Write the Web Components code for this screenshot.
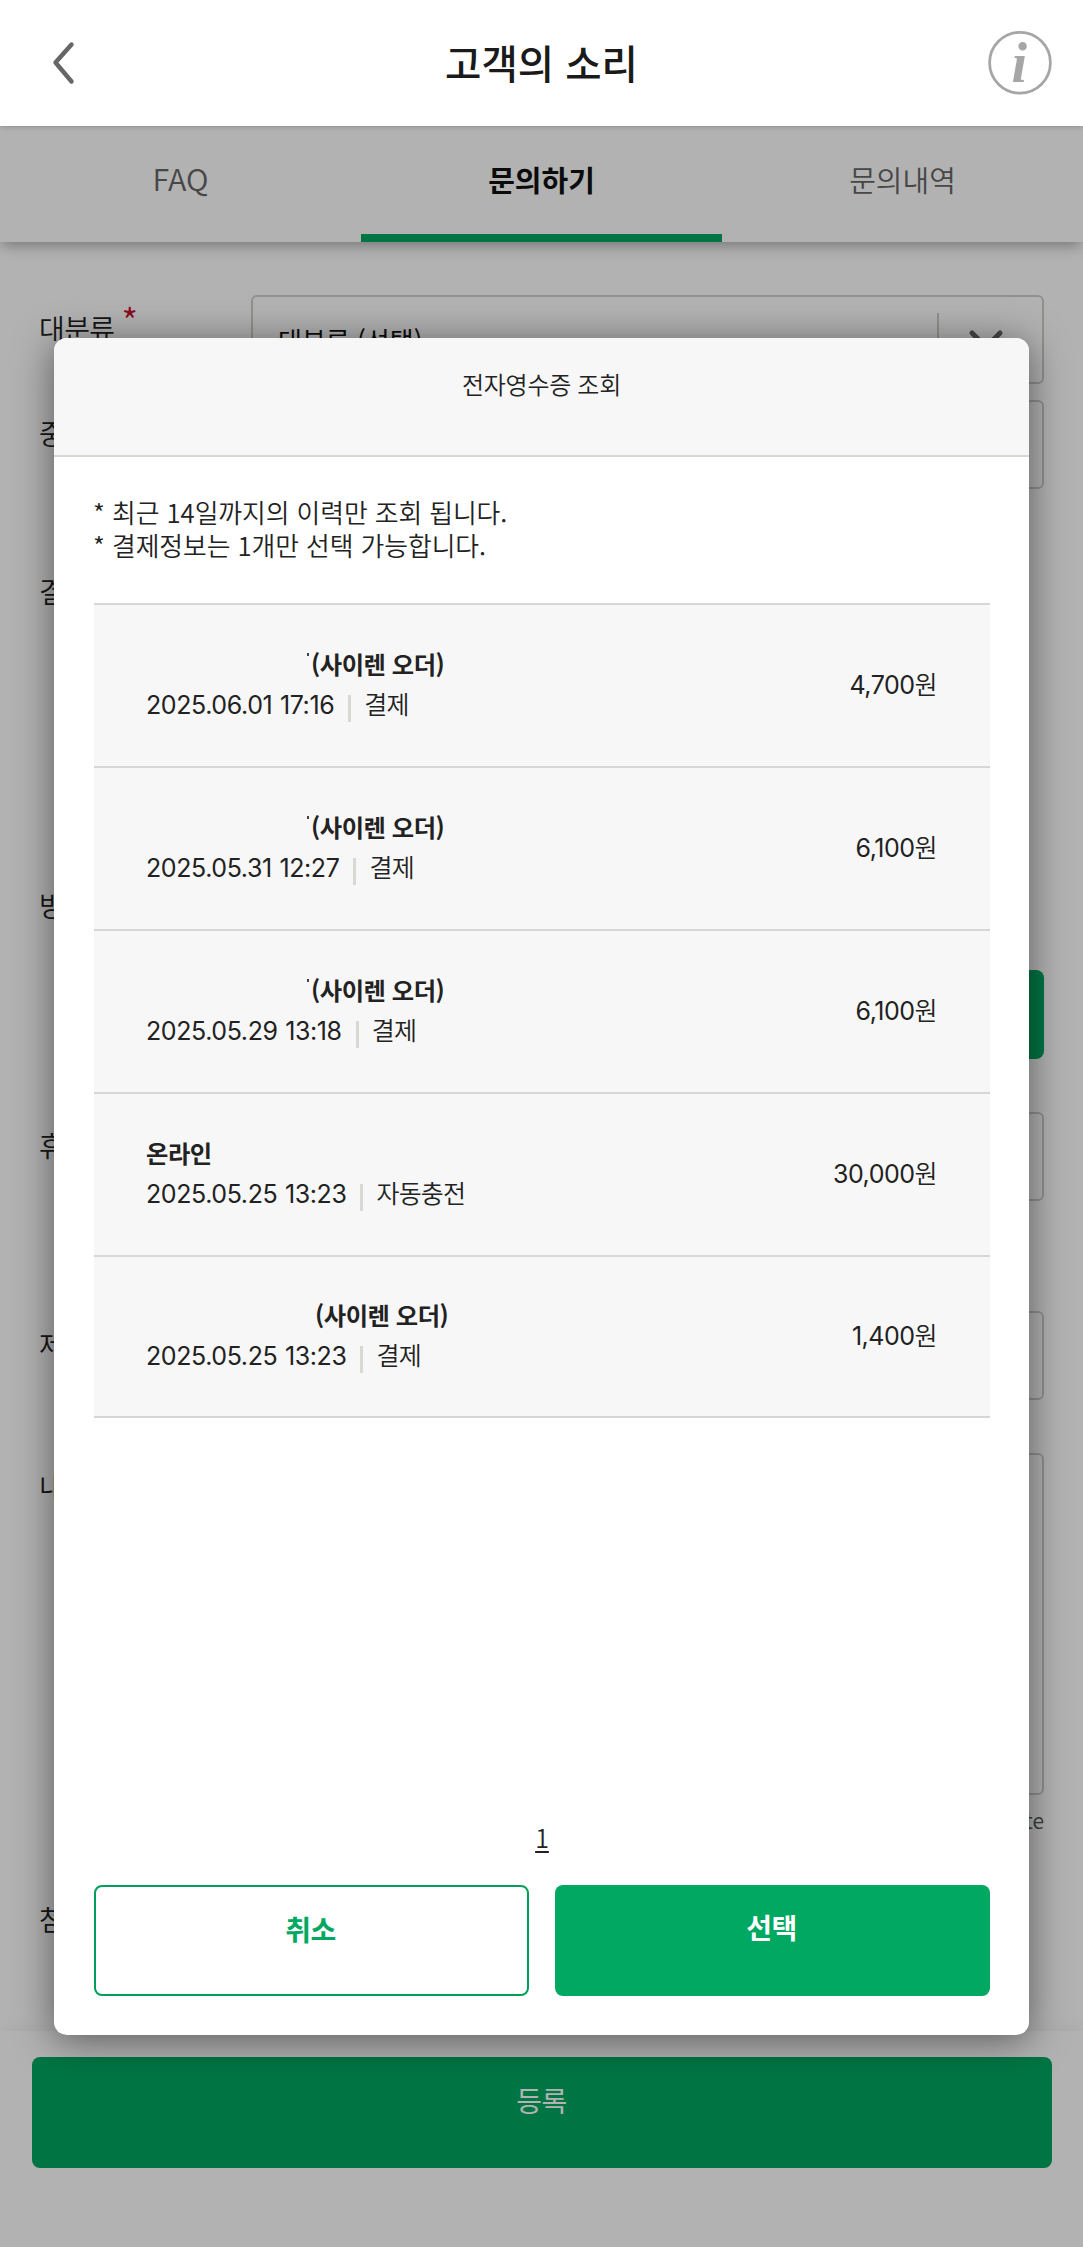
<!DOCTYPE html>
<html lang="ko">
<head>
<meta charset="utf-8">
<title>고객의 소리</title>
<style>
  body {
    margin: 0;
    height: 2247px;
    overflow: hidden;
    font-family: "Noto Sans CJK KR", sans-serif;
    font-weight: 350;
    color: #222;
    background: #fff;
  }
</style>
</head>
<body>
<voc-page>
  <voc-header slot="header">고객의 소리</voc-header>
  <voc-tabs slot="tabs">
    <voc-tab latin>FAQ</voc-tab>
    <voc-tab active>문의하기</voc-tab>
    <voc-tab>문의내역</voc-tab>
  </voc-tabs>

  <form-row label="대분류" required style="height:105px"><select-box open-label="대분류 (선택)"></select-box></form-row>
  <form-row label="중분류" style="height:158px"><input-box></input-box></form-row>
  <form-row label="결제정보" style="height:314px"></form-row>
  <form-row label="방문매장" style="height:240px"><input-box filled style="margin-top:98px"></input-box></form-row>
  <form-row label="휴대폰" style="height:199px"><input-box></input-box></form-row>
  <form-row label="제목" style="height:142px"><input-box></input-box></form-row>
  <form-row label="내용" style="height:433px"><input-box style="height:342px"></input-box><span style="display:block;margin-top:9px;text-align:right;font-size:21px;line-height:32px;color:#555">byte</span></form-row>
  <form-row label="첨부파일" style="height:100px"></form-row>

  <voc-footer slot="footer">등록</voc-footer>

  <receipt-modal slot="modal" heading="전자영수증 조회">
    <span slot="notice">* 최근 14일까지의 이력만 조회 됩니다.</span>
    <span slot="notice2">* 결제정보는 1개만 선택 가능합니다.</span>
    <receipt-item date="2025.06.01 17:16" kind="결제" price="4,700" indent="160" tick>(사이렌 오더)</receipt-item>
    <receipt-item date="2025.05.31 12:27" kind="결제" price="6,100" indent="160" tick>(사이렌 오더)</receipt-item>
    <receipt-item date="2025.05.29 13:18" kind="결제" price="6,100" indent="160" tick>(사이렌 오더)</receipt-item>
    <receipt-item date="2025.05.25 13:23" kind="자동충전" price="30,000">온라인</receipt-item>
    <receipt-item date="2025.05.25 13:23" kind="결제" price="1,400" indent="169" style="height:161px;padding-top:38px">(사이렌 오더)</receipt-item>
    <voc-button slot="actions" outline>취소</voc-button>
    <voc-button slot="actions">선택</voc-button>
  </receipt-modal>
</voc-page>

<script>
// small helper: put the markup in an open shadow root
function shadow(el, html) {
  const template = document.createElement("template");
  template.innerHTML = html;
  el.attachShadow({ mode: "open" }).append(template.content.cloneNode(true));
}

class VocPage extends HTMLElement {
  constructor() {
    super();
    shadow(this, `
      <style>
        :host { display: flex; flex-direction: column; position: relative; height: 2247px; overflow: hidden; }
        main { flex: 1; padding: 53px 39px 0 40px; min-height: 0; overflow: hidden; }
        .dim { position: absolute; inset: 126px 0 0; z-index: 3; background: rgba(0,0,0,.3); }
        slot[name=modal]::slotted(*) { position: absolute; left: 54px; top: 338px; z-index: 5; }
      </style>
      <slot name="header"></slot>
      <slot name="tabs"></slot>
      <main><slot></slot></main>
      <slot name="footer"></slot>
      <div class="dim"></div>
      <slot name="modal"></slot>
    `);
  }
}

class VocHeader extends HTMLElement {
  constructor() {
    super();
    shadow(this, `
      <style>
        :host { display: flex; justify-content: space-between; align-items: center; flex: none;
          height: 126px; box-sizing: border-box; padding: 0 30px 0 46px; position: relative; z-index: 4;
          background: #fff; box-shadow: 0 1px 5px rgba(0,0,0,.2); }
        h1 { margin: 0 0 2px; font-size: 39.5px; font-weight: 500; line-height: 60px; color: #1a1a1a; }
        svg { display: block; }
      </style>
      <svg width="50" height="66" viewBox="0 0 50 66"><path d="M25.5 14.5 9.5 32.5 25.5 51.5" fill="none" stroke="#666" stroke-width="4.4" stroke-linecap="round" stroke-linejoin="round"/></svg>
      <h1><slot></slot></h1>
      <svg width="66" height="66" viewBox="0 0 66 66">
        <circle cx="33" cy="32.7" r="30.4" fill="none" stroke="#a6a6a6" stroke-width="2.8"/>
        <text x="24.5" y="51.5" font-family="Liberation Serif" font-size="56" font-weight="bold" font-style="italic" fill="#a6a6a6">i</text>
      </svg>
    `);
  }
}

class VocTabs extends HTMLElement {
  constructor() {
    super();
    shadow(this, `
      <style>
        :host { display: grid; grid-template-columns: repeat(3, 1fr); flex: none; height: 116px;
          position: relative; z-index: 1; background: #fff; box-shadow: 0 5px 14px -2px rgba(0,0,0,.36); }
      </style>
      <slot></slot>
    `);
  }
}

class VocTab extends HTMLElement {
  constructor() {
    super();
    shadow(this, `
      <style>
        :host { display: block; box-sizing: border-box; padding-top: 32px; text-align: center;
          font-size: 29px; line-height: 42px; font-weight: 350; color: #666; }
        :host([latin]) { padding-top: 31px; font-size: 30.5px; }
        :host([active]) { font-weight: 700; color: #111; border-bottom: 8px solid #00a862; }
      </style>
      <slot></slot>
    `);
  }
}

class FormRow extends HTMLElement {
  constructor() {
    super();
    const star = this.hasAttribute("required") ? "<sup>*</sup>" : "";
    shadow(this, `
      <style>
        :host { display: grid; grid-template-columns: 211px minmax(0, 1fr); }
        label { margin-left: -1px; padding-top: 13px; font-size: 28px; line-height: 40px; letter-spacing: -.6px; white-space: nowrap; }
        sup { margin-left: 7px; font-size: 36px; line-height: 0; vertical-align: 5px; color: #c8102e; }
      </style>
      <label>${this.getAttribute("label")}${star}</label>
      <div><slot></slot></div>
    `);
  }
}

class InputBox extends HTMLElement {
  constructor() {
    super();
    shadow(this, `
      <style>
        :host { display: block; box-sizing: border-box; height: 89px; border: 2px solid #cfcfca; border-radius: 6px; }
        :host([filled]) { background: #00a862; border: 0; border-radius: 8px; }
      </style>
    `);
  }
}

class SelectBox extends HTMLElement {
  constructor() {
    super();
    shadow(this, `
      <style>
        :host { display: flex; justify-content: space-between; box-sizing: border-box; height: 89px;
          border: 2px solid #cfcfca; border-radius: 6px; padding: 16px 38px 16px 25px; }
        span { font-size: 26px; line-height: 54px; font-weight: 400; color: #111; }
        i { display: flex; align-items: center; padding-left: 29px; border-left: 2px solid #cfcfca; }
      </style>
      <span>${this.getAttribute("open-label")}</span>
      <i><svg width="36" height="24" viewBox="0 0 36 24"><path d="M4 5 18 19 32 5" fill="none" stroke="#666" stroke-width="5" stroke-linecap="round" stroke-linejoin="round"/></svg></i>
    `);
  }
}

class VocFooter extends HTMLElement {
  constructor() {
    super();
    shadow(this, `
      <style>
        :host { display: block; flex: none; height: 216px; box-sizing: border-box; padding: 26px 31.5px 0;
          position: relative; background: #fff; box-shadow: 0 -2px 16px rgba(0,0,0,.06); }
        button { display: block; width: 100%; height: 111px; border: 0; border-radius: 8px; padding: 0 0 25px;
          background: #00a862; color: #fff; font: 400 28px/40px "Noto Sans CJK KR", sans-serif; letter-spacing: -.5px; }
      </style>
      <button><slot></slot></button>
    `);
  }
}

class ReceiptModal extends HTMLElement {
  constructor() {
    super();
    shadow(this, `
      <style>
        :host { display: flex; flex-direction: column; width: 975px; height: 1697px; border-radius: 13px;
          background: #fff; box-shadow: 0 5px 38px rgba(0,0,0,.5); }
        h2 { margin: 0; height: 119px; box-sizing: border-box; padding-top: 28px; border-bottom: 2px solid #d8d8d3;
          border-radius: 13px 13px 0 0; background: #f7f7f7; text-align: center;
          font-size: 24px; font-weight: inherit; line-height: 36px; letter-spacing: -.3px; }
        .notice { display: flex; flex-direction: column; padding: 38px 39px 0; height: 108px;
          font-size: 25.8px; line-height: 33px; letter-spacing: -.06px; }
        .list { margin: 0 39px 0 40px; border-top: 2px solid #d6d6d6; }
        .bottom { margin-top: auto; padding: 0 39px 39px 40px; }
        .page { display: block; margin-bottom: 30px; text-align: center; font-size: 25px; line-height: 36px;
          text-underline-offset: 3px; }
        .actions { display: grid; grid-template-columns: 1fr 1fr; gap: 26px; }
      </style>
      <h2>${this.getAttribute("heading")}</h2>
      <div class="notice"><slot name="notice"></slot><slot name="notice2"></slot></div>
      <div class="list"><slot></slot></div>
      <div class="bottom">
        <span class="page"><u>1</u></span>
        <div class="actions"><slot name="actions"></slot></div>
      </div>
    `);
  }
}

class ReceiptItem extends HTMLElement {
  constructor() {
    super();
    const indent = this.getAttribute("indent") || 0;
    const tick = this.hasAttribute("tick") ? "<b></b>" : "";
    shadow(this, `
      <style>
        :host { display: flex; justify-content: space-between; box-sizing: border-box; height: 163px;
          padding: 39px 53px 0 52px; background: #f7f7f7; border-bottom: 2px solid #d6d6d6;
          font-family: Inter, "Noto Sans CJK KR", sans-serif; font-size: 25px; font-weight: 400; }
        strong { display: flex; align-items: flex-start; padding-left: ${indent}px; font-weight: 700;
          font-family: "Noto Sans CJK KR", sans-serif; font-size: 24.3px; line-height: 40px; letter-spacing: -.45px; }
        b { width: 2px; height: 3px; margin: 9px 2px 0 1px; background: #444; }
        strong span { white-space: nowrap; }
        p { display: flex; align-items: center; margin: 1px 0 0; line-height: 40px; letter-spacing: -.4px; word-spacing: 1px; }
        p i { width: 3px; height: 27px; margin: 6px 13px 0 14px; background: #d8d8d4; }
        p span, .price span { font-weight: 350; }
        p span { letter-spacing: -.8px; }
        .price { padding-top: 21px; line-height: 40px; letter-spacing: -.5px; }
      </style>
      <div>
        <strong>${tick}<span><slot></slot></span></strong>
        <p>${this.getAttribute("date")}<i></i><span>${this.getAttribute("kind")}</span></p>
      </div>
      <div class="price">${this.getAttribute("price")}<span>원</span></div>
    `);
  }
}

class VocButton extends HTMLElement {
  constructor() {
    super();
    shadow(this, `
      <style>
        :host { display: block; height: 111px; box-sizing: border-box; padding: 22px 2px 0 0; border-radius: 8px;
          background: #00a862; color: #fff; text-align: center; font-size: 28px; font-weight: 700;
          line-height: 40px; letter-spacing: -.5px; }
        :host([outline]) { border: 2px solid #00a05c; background: #fff; color: #00a862; }
      </style>
      <slot></slot>
    `);
  }
}

customElements.define("voc-page", VocPage);
customElements.define("voc-header", VocHeader);
customElements.define("voc-tabs", VocTabs);
customElements.define("voc-tab", VocTab);
customElements.define("form-row", FormRow);
customElements.define("input-box", InputBox);
customElements.define("select-box", SelectBox);
customElements.define("voc-footer", VocFooter);
customElements.define("receipt-modal", ReceiptModal);
customElements.define("receipt-item", ReceiptItem);
customElements.define("voc-button", VocButton);
</script>
</body>
</html>
